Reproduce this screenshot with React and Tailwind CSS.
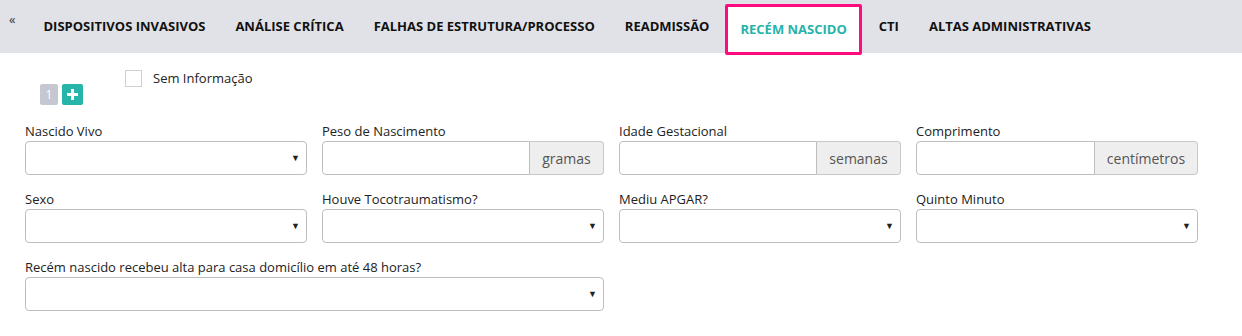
const tabs = [
  'DISPOSITIVOS INVASIVOS',
  'ANÁLISE CRÍTICA',
  'FALHAS DE ESTRUTURA/PROCESSO',
  'READMISSÃO',
  'RECÉM NASCIDO',
  'CTI',
  'ALTAS ADMINISTRATIVAS',
]

function Select() {
  return (
    <div className="h-[34px] rounded-[4px] border border-[#bdbdbd] bg-white flex items-center justify-end pr-[6px]">
      <span className="text-[9px] text-[#222]">▼</span>
    </div>
  )
}

function AddonInput({ addon, addonW }) {
  return (
    <div className="h-[34px] flex">
      <div className="flex-1 rounded-l-[4px] border border-[#bdbdbd] bg-white" />
      <div
        className={`${addonW} rounded-r-[4px] border border-l-0 border-[#c8c8c8] bg-[#eeeeee] flex items-center justify-center text-[14px] text-[#555]`}
      >
        {addon}
      </div>
    </div>
  )
}

function Field({ label, children }) {
  return (
    <div className="flex flex-col">
      <label className="text-[13px] text-[#222] leading-[18px] mb-[1px]">{label}</label>
      {children}
    </div>
  )
}

export default function App() {
  return (
    <div className="w-[1242px] h-[336px] bg-white overflow-hidden" style={{ fontFamily: '"Open Sans", sans-serif' }}>
      {/* Tabs */}
      <div className="h-[53px] bg-[#e1e2e7] flex items-start pl-[9px]">
        <span className="text-[13px] text-[#333] mt-[13px] mr-[13px] leading-none">«</span>
        {tabs.map((t) =>
          t === 'RECÉM NASCIDO' ? (
            <div
              key={t}
              className="mt-[4px] h-[51px] px-[12px] bg-white border-[3px] border-[#ff0a7f] rounded-[2px] flex items-center text-[13px] font-bold text-[#26b3a8] ml-[1px] mr-[2px]"
            >
              {t}
            </div>
          ) : (
            <div key={t} className="h-[53px] px-[15px] flex items-center text-[13px] font-bold text-[#111] first:pl-[14px]">
              {t}
            </div>
          )
        )}
      </div>

      {/* Top controls */}
      <div className="relative h-[69px]">
        <div className="absolute left-[125px] top-[16px] flex items-center">
          <div className="w-[17px] h-[17px] border border-[#d0d0d0] bg-white" />
          <span className="ml-[11px] text-[13px] text-[#222]">Sem Informação</span>
        </div>
        <div className="absolute left-[40px] top-[31px] flex gap-[4px]">
          <div className="w-[18px] h-[21px] rounded-[2px] bg-[#c5c8d1] text-white text-[12px] flex items-center justify-center">1</div>
          <div className="w-[21px] h-[21px] rounded-[2px] bg-[#26b5a8] flex items-center justify-center">
            <svg width="11" height="11" viewBox="0 0 11 11">
              <path d="M4 0h3v4h4v3H7v4H4V7H0V4h4z" fill="white" />
            </svg>
          </div>
        </div>
      </div>

      {/* Form */}
      <div className="pl-[25px] pr-[44px] flex flex-col gap-[15px]">
        <div className="grid grid-cols-4 gap-x-[15px]">
          <Field label="Nascido Vivo"><Select /></Field>
          <Field label="Peso de Nascimento"><AddonInput addon="gramas" addonW="w-[74px]" /></Field>
          <Field label="Idade Gestacional"><AddonInput addon="semanas" addonW="w-[84px]" /></Field>
          <Field label="Comprimento"><AddonInput addon="centímetros" addonW="w-[103px]" /></Field>
        </div>
        <div className="grid grid-cols-4 gap-x-[15px]">
          <Field label="Sexo"><Select /></Field>
          <Field label="Houve Tocotraumatismo?"><Select /></Field>
          <Field label="Mediu APGAR?"><Select /></Field>
          <Field label="Quinto Minuto"><Select /></Field>
        </div>
        <div className="grid grid-cols-4 gap-x-[15px]">
          <div className="col-span-2">
            <Field label="Recém nascido recebeu alta para casa domicílio em até 48 horas?"><Select /></Field>
          </div>
        </div>
      </div>
    </div>
  )
}
